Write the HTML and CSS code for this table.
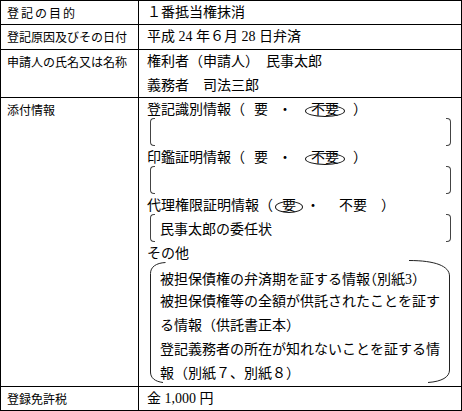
FILE: index.html
```html
<!DOCTYPE html>
<html lang="ja">
<head>
<meta charset="utf-8">
<link rel="stylesheet" href="styles.css">
</head>
<body>
<div class="sheet">
  <div class="label r1 spaced">登記の目的</div>
  <div class="value r1">１番抵当権抹消</div>

  <div class="label r2">登記原因及びその日付</div>
  <div class="value r2">平成 24 年６月 28 日弁済</div>

  <div class="label r3">申請人の氏名又は名称</div>
  <div class="value r3">
    <div class="line">権利者（申請人）　民事太郎</div>
    <div class="line">義務者　司法三郎</div>
  </div>

  <div class="label r4">添付情報</div>
  <div class="value r4">
    <div class="line">登記識別情報<span class="paren">（</span><span class="c-yes">要</span><span class="c-dot">・</span><span class="c-no circled">不要</span><span class="c-close">）</span></div>
    <div class="brk"></div>
    <div class="line">印鑑証明情報<span class="paren">（</span><span class="c-yes">要</span><span class="c-dot">・</span><span class="c-no circled">不要</span><span class="c-close">）</span></div>
    <div class="brk"></div>
    <div class="line">代理権限証明情報<span class="paren">（</span><span class="c-yes circled narrow">要</span><span class="c-dot">・</span><span class="c-no">不要</span><span class="c-close">）</span></div>
    <div class="brk">民事太郎の委任状</div>
    <div class="line">その他</div>
    <div class="big">
      <svg class="big-shape" width="313" height="126" viewBox="0 0 313 126" aria-hidden="true">
        <path d="M18.5 2.5 C9 3 3.5 7 3.5 13.5 V112 C3.5 118 8 121.5 16 122.5"/>
        <path d="M262 0.5 C288 0.5 302.5 6 302.5 16 V110 C302.5 117 295 121.5 281 122.5"/>
      </svg>
      <div class="line">被担保債権の弁済期を証する情報<span class="half">（</span>別紙3<span class="half">）</span></div>
      <div class="line">被担保債権等の全額が供託されたことを証す</div>
      <div class="line">る情報（供託書正本）</div>
      <div class="line">登記義務者の所在が知れないことを証する情</div>
      <div class="line">報（別紙７、別紙８）</div>
    </div>
  </div>

  <div class="label r5">登録免許税</div>
  <div class="value r5">金 1,000 円</div>
</div>
</body>
</html>
```

FILE: styles.css
```css
html, body {
  margin: 0;
  padding: 0;
  background: #fff;
}

.sheet {
  display: grid;
  grid-template-columns: 138px 1fr;
  grid-template-rows: 24px 25px 48px 289px 23px;
  width: 462px;
  height: 411px;
  box-sizing: border-box;
  border: 1px solid #000;
  color: #000;
}

.label,
.value {
  box-sizing: border-box;
  border-bottom: 1px solid #000;
  line-height: 24px;
  white-space: nowrap;
}

.r5 {
  border-bottom: none;
}

.label {
  border-right: 1px solid #000;
  padding-left: 6px;
  font-family: "Noto Sans CJK JP", sans-serif;
  font-size: 12px;
}

.spaced {
  letter-spacing: 2px;
}

.value {
  padding-left: 8px;
  font-family: "Liberation Serif", "Noto Sans CJK JP", serif;
  font-size: 14px;
}

.line {
  height: 24px;
  line-height: 24px;
}

.c-yes,
.c-no,
.c-dot,
.c-close {
  display: inline-block;
  position: relative;
}

.c-yes { margin-left: 9px; }
.c-dot { margin-left: 10px; }
.c-no { margin-left: 19px; }
.c-close { margin-left: 14px; }

.circled::after {
  content: "";
  position: absolute;
  left: -6px;
  right: -6px;
  top: 50%;
  height: 10px;
  margin-top: -5px;
  border: 1px solid #111;
  border-radius: 50%;
}

.circled.narrow::after {
  left: -7px;
  right: -7px;
}

.brk {
  position: relative;
  height: 24px;
  line-height: 24px;
  padding-left: 13px;
}

.brk::before,
.brk::after {
  content: "";
  position: absolute;
  top: -4px;
  bottom: 0;
  width: 4px;
  border: 1px solid #444;
}

.brk::before {
  left: 3px;
  border-right: none;
  border-radius: 4px 0 0 4px;
}

.brk::after {
  right: 10px;
  border-left: none;
  border-radius: 0 4px 4px 0;
}

.big {
  position: relative;
  padding-left: 13px;
}

.big-shape {
  position: absolute;
  left: 0;
  top: -6px;
  overflow: visible;
}

.big-shape path {
  fill: none;
  stroke: #222;
  stroke-width: 1;
}

.half {
  font-family: "Noto Sans CJK JP", sans-serif;
  font-feature-settings: "halt" 1;
}
```
